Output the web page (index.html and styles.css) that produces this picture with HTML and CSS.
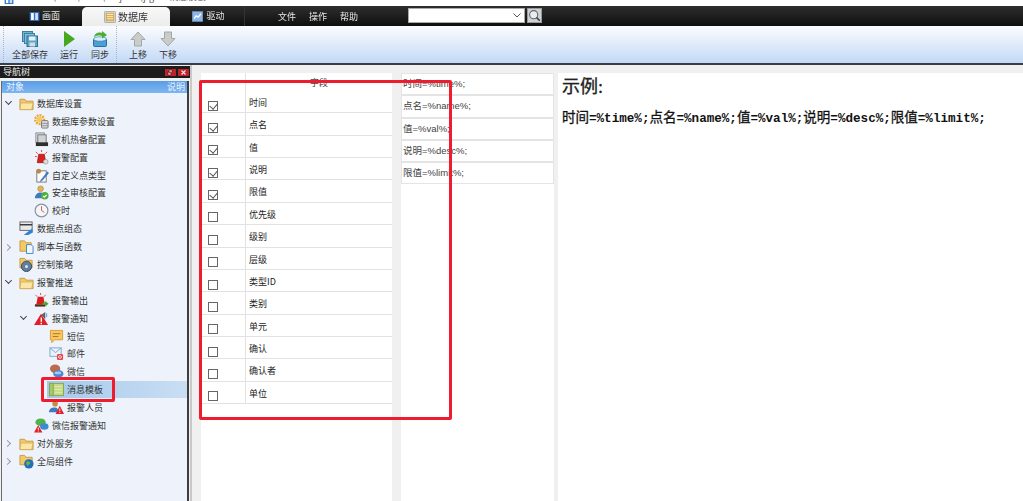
FILE: index.html
```html
<!DOCTYPE html>
<html lang="zh">
<head>
<meta charset="utf-8">
<title>消息模板</title>
<link rel="stylesheet" href="styles.css">
</head>
<body>
<svg class="defs" width="0" height="0" aria-hidden="true">
  <defs>
    <symbol id="folder" viewBox="0 0 16 16"><path d="M1 3.500h5l1.500 2H15v9H1z" fill="#f3c866" stroke="#c79a45"/><path d="M2 7.500h13l-1.500 7H1z" fill="#fbe6a6" stroke="#cfa550" stroke-width=".7"/></symbol>
    <symbol id="gear" viewBox="0 0 16 16"><circle cx="6" cy="6" r="4.600" fill="none" stroke="#eda52a" stroke-width="2.600" stroke-dasharray="2 1"/><circle cx="6" cy="6" r="3" fill="#f6c862"/><rect x="8" y="7" width="7" height="8" rx="1" fill="#d8dadf" stroke="#777"/><path d="M8 10h7M8 12.500h7" stroke="#777" stroke-width=".7"/></symbol>
    <symbol id="server" viewBox="0 0 16 16"><rect x="2" y="1" width="9" height="10" fill="#e8e8e8" stroke="#888"/><rect x="4" y="3" width="9" height="10" fill="#cfd2d6" stroke="#777"/><rect x="2" y="11" width="13" height="4" fill="#2e2e2e"/></symbol>
    <symbol id="alarm" viewBox="0 0 16 16"><path d="M5 4.500h6l1.500 9h-9z" fill="#d91f1f" stroke="#8e1010" stroke-width=".7"/><path d="M2 2l2 2M14 2l-2 2M1 7h2M8 0v2" stroke="#e94040"/><circle cx="12.500" cy="12.500" r="2.500" fill="#ddd" stroke="#888" stroke-width=".6"/></symbol>
    <symbol id="custom" viewBox="0 0 16 16"><rect x="3" y="3" width="10" height="12" fill="#fdfdfd" stroke="#777"/><circle cx="5" cy="3.500" r="2.600" fill="#b98b4a"/><path d="M14.500 4L8 12l-1.500 2.500L9 13l6.500-7.500z" fill="#3d7fd0" stroke="#2c5c9c" stroke-width=".5"/></symbol>
    <symbol id="user" viewBox="0 0 16 16"><circle cx="7" cy="4" r="3" fill="#e6b25a" stroke="#a97a2c" stroke-width=".6"/><path d="M1 14c0-4 3-6 6-6s5 2 5 6z" fill="#3f78c4"/><circle cx="11.500" cy="11.500" r="4" fill="#4fae3c"/><path d="M9.500 11.500l1.500 1.500 2.500-2.500" fill="none" stroke="#fff" stroke-width="1.200"/></symbol>
    <symbol id="clock" viewBox="0 0 16 16"><circle cx="8" cy="8" r="6.800" fill="#f4f5f8" stroke="#8b93a3" stroke-width="1.300"/><path d="M8 3.500V8l3 2" fill="none" stroke="#c35a50"/></symbol>
    <symbol id="dbcomp" viewBox="0 0 16 16"><rect x="1" y="1" width="13" height="9" fill="#e9e9e9" stroke="#666"/><path d="M1 4h13" stroke="#333" stroke-width="1.500"/><path d="M5 15l9-7 1 4-5 3z" fill="#2b84d8"/></symbol>
    <symbol id="folderdoc" viewBox="0 0 16 16"><path d="M1 2h5l1.500 2H13v9H1z" fill="#f3c866" stroke="#c79a45"/><path d="M8 6h5l2 2v7.500H8z" fill="#eef6fd" stroke="#3c87c8"/></symbol>
    <symbol id="foldercd" viewBox="0 0 16 16"><path d="M1 1.500h5l1.500 2H14v8H1z" fill="#f3c866" stroke="#c79a45"/><circle cx="8" cy="10" r="5.500" fill="#5f7f9c" stroke="#33495e"/><circle cx="8" cy="10" r="1.600" fill="#dce6ee"/></symbol>
    <symbol id="alarmout" viewBox="0 0 16 16"><path d="M4 4h6l1.500 8h-9z" fill="#d91f1f"/><path d="M1.500 2l2 2M12.500 2l-2 2M7 0v2" stroke="#e94040"/><rect x="1" y="12" width="11" height="2.500" fill="#5b2a18"/><path d="M9 10.500h3V8.500l3.500 3-3.500 3v-2H9z" fill="#46a52f"/></symbol>
    <symbol id="alarmnote" viewBox="0 0 16 16"><path d="M7.500 3L15 15H0z" fill="#e21f26"/><path d="M7 7h1.500v4.500H7zM7 12.500h1.500V14H7z" fill="#fff"/><path d="M8 4l4-3v8z" fill="#59616e"/><path d="M13.500 2.500v4" stroke="#5b9ade"/></symbol>
    <symbol id="sms" viewBox="0 0 16 16"><path d="M1.500 1.500h13v10H6l-3 3v-3H1.500z" fill="#f8c760" stroke="#d89c2c"/><path d="M4 5h8M4 8h6" stroke="#a97420"/></symbol>
    <symbol id="mail" viewBox="0 0 16 16"><rect x="1" y="2" width="12" height="9" fill="#eaf3fc" stroke="#7fa4cc"/><path d="M1 2l6 5 6-5" fill="none" stroke="#7fa4cc"/><rect x="8.500" y="8.500" width="6.500" height="6.500" rx="1.500" fill="#e8474b"/><circle cx="11.700" cy="11.700" r="1.500" fill="none" stroke="#fff" stroke-width=".8"/></symbol>
    <symbol id="wechat" viewBox="0 0 16 16"><ellipse cx="6.500" cy="5" rx="5.500" ry="4.500" fill="#bd6a4e"/><ellipse cx="10" cy="10.500" rx="5.500" ry="4" fill="#4d87d0"/><ellipse cx="9.500" cy="9.500" rx="3.500" ry="1.500" fill="#a6c9ee"/></symbol>
    <symbol id="template" viewBox="0 0 16 16"><rect x=".5" y="1.500" width="15" height="13" fill="#c5da84" stroke="#84a851"/><rect x=".5" y="1.500" width="4" height="13" fill="#a9c76c" stroke="#84a851"/><path d="M6 5h8M6 8h8M6 11h8" stroke="#e3eeb9"/></symbol>
    <symbol id="alarmuser" viewBox="0 0 16 16"><circle cx="6.500" cy="4" r="3" fill="#c98b3e"/><path d="M0 13c0-3.500 3-5 6-5s4 2 4 5z" fill="#3f78c4"/><path d="M11.500 6L16 15H7z" fill="#e21f26"/><path d="M11.100 9h.9v3h-.9zM11.100 12.800h.9v1h-.9z" fill="#fff"/></symbol>
    <symbol id="wxalarm" viewBox="0 0 16 16"><ellipse cx="7" cy="4.500" rx="5.500" ry="4" fill="#4fb24a"/><ellipse cx="11" cy="9" rx="4.500" ry="3.500" fill="#3d8ad6"/><path d="M4.500 7.500L9 15.500H0z" fill="#e21f26"/><path d="M4.100 10h.9v2.700h-.9zM4.100 13.300h.9v1h-.9z" fill="#fff"/></symbol>
    <symbol id="folderglobe" viewBox="0 0 16 16"><path d="M1 1.500h5l1.500 2H14v8H1z" fill="#f3c866" stroke="#c79a45"/><circle cx="10.500" cy="10.500" r="5" fill="#1f6fbe"/><path d="M7.500 9c2-2 3-1 4-.5s1 2-1 3-2 2-1.500 3" fill="#6fb04a"/></symbol>
    <symbol id="save" viewBox="0 0 16 16"><rect x=".5" y=".5" width="10" height="10" fill="#6fb4d6" stroke="#3d7f9f"/><rect x="2.500" y="2.500" width="10" height="10" fill="#7fc0de" stroke="#3d7f9f"/><rect x="5" y="5" width="10.500" height="10.500" fill="#5da7c9" stroke="#2f6f90"/><rect x="7" y="5.500" width="6.500" height="4" fill="#e6f2f8"/><rect x="7.500" y="11.500" width="5.500" height="4" fill="#d5dde2"/></symbol>
    <symbol id="sync" viewBox="0 0 16 16"><rect x="1.500" y="8" width="13" height="7.500" rx="1" fill="#4a9fd6" stroke="#2c6f9c"/><ellipse cx="8" cy="8" rx="6.500" ry="2.200" fill="#d9eefb" stroke="#2c6f9c" stroke-width=".6"/><path d="M2 6.500C2.500 2.500 6 .8 10 2V0l5 4-5 3.500V5C7 4 4 4.500 2 6.500z" fill="#4cae32"/></symbol>
    <symbol id="arrow" viewBox="0 0 16 16"><path d="M8 1l7 7.500h-3.500V15h-7V8.500H1z" fill="#c9cdc9" stroke="#a4a8a4"/></symbol>
    <symbol id="search" viewBox="0 0 16 16"><circle cx="7" cy="7" r="5" fill="#e9edf0" stroke="#5c6670" stroke-width="1.300"/><path d="M10.500 10.500l4 4" stroke="#3a3f44" stroke-width="2"/></symbol>
    <symbol id="tabscreen" viewBox="0 0 16 16"><rect x="1" y="1.500" width="14" height="13" fill="#2e6fc2"/><rect x="3" y="3" width="4" height="10" fill="#fff"/><rect x="9" y="3" width="4" height="10" fill="#cfe1f6"/></symbol>
    <symbol id="tabdb" viewBox="0 0 16 16"><rect x=".5" y=".5" width="15" height="15" rx="1.500" fill="#d9d9d9" stroke="#9a9a9a"/><rect x="3" y="3" width="10" height="10" fill="#fbe9b8" stroke="#c89a3c"/><path d="M3 6h10M3 8.500h10M3 11h10" stroke="#d19b2e"/></symbol>
    <symbol id="tabdrive" viewBox="0 0 16 16"><rect x=".5" y="1" width="15" height="14" fill="#8fb6e6" stroke="#6d9fd6"/><path d="M3 11l3-4 3 2 4-5" fill="none" stroke="#fff" stroke-width="2"/></symbol>
  </defs>
</svg>

<div class="app">
  <div class="titlebar">
    <svg class="title-icon"><use href="#tabscreen"/></svg>
    <span>ICS</span><span class="title-path">D:\kean\kiosk\Projects\jtgm - 消息模板</span>
  </div>

  <div class="menubar">
    <div class="tab tab-first"><svg class="tab-icon"><use href="#tabscreen"/></svg>画面</div>
    <div class="tab tab-active"><svg class="tab-icon"><use href="#tabdb"/></svg>数据库</div>
    <div class="tab tab-last"><svg class="tab-icon"><use href="#tabdrive"/></svg>驱动</div>
    <nav class="menu"><span>文件</span><span>操作</span><span>帮助</span></nav>
    <div class="combo"><svg class="chev" viewBox="0 0 8 5"><path d="M.5.500L4 4l3.500-3.500" fill="none" stroke="#555"/></svg></div>
    <div class="search-btn"><svg class="search-icon"><use href="#search"/></svg></div>
  </div>

  <div class="toolbar">
    <div class="tool-group">
      <div class="tool tool-save"><svg class="tool-icon"><use href="#save"/></svg>全部保存</div>
      <div class="tool tool-run"><svg class="tool-icon" viewBox="0 0 16 16"><path d="M3 0l11 8-11 8z" fill="#46a81e"/></svg>运行</div>
      <div class="tool"><svg class="tool-icon"><use href="#sync"/></svg>同步</div>
    </div>
    <div class="tool-group tool-group-2">
      <div class="tool"><svg class="tool-icon"><use href="#arrow"/></svg>上移</div>
      <div class="tool"><svg class="tool-icon flip"><use href="#arrow"/></svg>下移</div>
    </div>
  </div>

  <div class="main">
    <aside class="nav">
      <div class="nav-head"><span>导航树</span><div class="nav-btns"><i class="nav-btn"><svg class="nav-glyph" viewBox="0 0 7 7"><path d="M2 1h3v3H2zM1 3h3v3H1z" fill="#f5d5d5" stroke="#5a0c0c" stroke-width=".6"/></svg></i><i class="nav-btn"><svg class="nav-glyph" viewBox="0 0 7 7"><path d="M1.500 1.500l4 4M5.500 1.500l-4 4" stroke="#f7dede" stroke-width="1.200"/></svg></i></div></div>
      <div class="tree">
        <div class="tree-head"><span>对象</span><span>说明</span></div>
        <div class="row l1"><b class="tog open"></b><svg class="ico"><use href="#folder"/></svg>数据库设置</div>
        <div class="row l2"><b class="tog"></b><svg class="ico"><use href="#gear"/></svg>数据库参数设置</div>
        <div class="row l2"><b class="tog"></b><svg class="ico"><use href="#server"/></svg>双机热备配置</div>
        <div class="row l2"><b class="tog"></b><svg class="ico"><use href="#alarm"/></svg>报警配置</div>
        <div class="row l2"><b class="tog"></b><svg class="ico"><use href="#custom"/></svg>自定义点类型</div>
        <div class="row l2"><b class="tog"></b><svg class="ico"><use href="#user"/></svg>安全审核配置</div>
        <div class="row l2"><b class="tog"></b><svg class="ico"><use href="#clock"/></svg>校时</div>
        <div class="row l1"><b class="tog"></b><svg class="ico"><use href="#dbcomp"/></svg>数据点组态</div>
        <div class="row l1"><b class="tog shut"></b><svg class="ico"><use href="#folderdoc"/></svg>脚本与函数</div>
        <div class="row l1"><b class="tog"></b><svg class="ico"><use href="#foldercd"/></svg>控制策略</div>
        <div class="row l1"><b class="tog open"></b><svg class="ico"><use href="#folder"/></svg>报警推送</div>
        <div class="row l2"><b class="tog"></b><svg class="ico"><use href="#alarmout"/></svg>报警输出</div>
        <div class="row l2"><b class="tog open"></b><svg class="ico"><use href="#alarmnote"/></svg>报警通知</div>
        <div class="row l3"><b class="tog"></b><svg class="ico"><use href="#sms"/></svg>短信</div>
        <div class="row l3"><b class="tog"></b><svg class="ico"><use href="#mail"/></svg>邮件</div>
        <div class="row l3"><b class="tog"></b><svg class="ico"><use href="#wechat"/></svg>微信</div>
        <div class="row l3"><b class="tog"></b><span class="sel"><svg class="ico"><use href="#template"/></svg>消息模板</span></div>
        <div class="row l3"><b class="tog"></b><svg class="ico"><use href="#alarmuser"/></svg>报警人员</div>
        <div class="row l2"><b class="tog"></b><svg class="ico"><use href="#wxalarm"/></svg>微信报警通知</div>
        <div class="row l1"><b class="tog shut"></b><svg class="ico"><use href="#folder"/></svg>对外服务</div>
        <div class="row l1"><b class="tog shut"></b><svg class="ico"><use href="#folderglobe"/></svg>全局组件</div>
      </div>
    </aside>
    <div class="splitter"></div>

    <section class="grid">
      <div class="g-row g-head"><div class="g-check"></div><div class="g-name g-title">字段</div></div>
      <div class="g-row"><div class="g-check"><i class="cb on"></i></div><div class="g-name">时间</div></div>
      <div class="g-row"><div class="g-check"><i class="cb on"></i></div><div class="g-name">点名</div></div>
      <div class="g-row"><div class="g-check"><i class="cb on"></i></div><div class="g-name">值</div></div>
      <div class="g-row"><div class="g-check"><i class="cb on"></i></div><div class="g-name">说明</div></div>
      <div class="g-row"><div class="g-check"><i class="cb on"></i></div><div class="g-name">限值</div></div>
      <div class="g-row"><div class="g-check"><i class="cb"></i></div><div class="g-name">优先级</div></div>
      <div class="g-row"><div class="g-check"><i class="cb"></i></div><div class="g-name">级别</div></div>
      <div class="g-row"><div class="g-check"><i class="cb"></i></div><div class="g-name">层级</div></div>
      <div class="g-row"><div class="g-check"><i class="cb"></i></div><div class="g-name">类型ID</div></div>
      <div class="g-row"><div class="g-check"><i class="cb"></i></div><div class="g-name">类别</div></div>
      <div class="g-row"><div class="g-check"><i class="cb"></i></div><div class="g-name">单元</div></div>
      <div class="g-row"><div class="g-check"><i class="cb"></i></div><div class="g-name">确认</div></div>
      <div class="g-row"><div class="g-check"><i class="cb"></i></div><div class="g-name">确认者</div></div>
      <div class="g-row"><div class="g-check"><i class="cb"></i></div><div class="g-name">单位</div></div>
    </section>

    <section class="tpl">
      <div class="tpl-row">时间=%time%;</div>
      <div class="tpl-row">点名=%name%;</div>
      <div class="tpl-row">值=%val%;</div>
      <div class="tpl-row">说明=%desc%;</div>
      <div class="tpl-row">限值=%limit%;</div>
    </section>

    <section class="preview">
      <h1 class="pv-title">示例:</h1>
      <p class="pv-text"><span class="cj">时间</span>=%time%;<span class="cj">点名</span>=%name%;<span class="cj">值</span>=%val%;<span class="cj">说明</span>=%desc%;<span class="cj">限值</span>=%limit%;</p>
    </section>
  </div>

  <div class="mark mark-grid"></div>
  <div class="mark mark-item"></div>
</div>
</body>
</html>
```

FILE: styles.css
```css
* { box-sizing: border-box; }
html, body { margin: 0; padding: 0; height: 100%; overflow: hidden; }
body { font-family: "Noto Sans CJK SC", "Liberation Sans", sans-serif; font-size: 9px; color: #222; background: #f0f0f0; }
.defs { position: absolute; }
.app { position: relative; width: 1023px; height: 501px; display: flex; flex-direction: column; overflow: hidden; filter: blur(.4px); }

.titlebar { height: 6px; flex: none; background: #fff; display: flex; align-items: flex-end; gap: 12px; padding: 0 0 3px 4px; font-size: 9px; line-height: 12px; color: #555; overflow: hidden; }
.title-icon { width: 10px; height: 10px; flex: none; margin-bottom: -2px; margin-right: -8px; }

.menubar { height: 20px; flex: none; display: flex; align-items: stretch; background: linear-gradient(#2e2e2e, #0f0f0f); color: #e6e6e6; font-size: 9px; }
.tab { display: flex; align-items: center; justify-content: center; gap: 2px; line-height: 20px; }
.tab-first { width: 82px; padding-left: 7px; }
.tab-active { width: 88px; margin-top: 1px; background: linear-gradient(#f8f8f8, #ececec); border-radius: 5px 5px 0 0; color: #333; font-size: 10px; }
.tab-last { width: 75px; padding-left: 3px; gap: 3px; border-right: 1px solid #333; }
.tab-icon { width: 11px; height: 11px; }
.tab-active .tab-icon { width: 12px; height: 12px; }
.menu { display: flex; gap: 13px; margin-left: 33px; align-items: center; }
.combo { width: 117px; height: 15px; margin: 2px 0 0 50px; background: #fff; border: 1px solid #aaa; display: flex; align-items: center; justify-content: flex-end; padding-right: 3px; }
.chev { width: 8px; height: 5px; }
.search-btn { width: 15px; height: 15px; margin: 2px 0 0 2px; background: #cfd2d4; border: 1px solid #9a9a9a; display: flex; align-items: center; justify-content: center; }
.search-icon { width: 13px; height: 13px; }

.toolbar { height: 39px; flex: none; display: flex; background: linear-gradient(#fbfcfe, #c3d9f6); border-bottom: 2px solid #3b3f45; padding-left: 3px; }
.tool-group { display: flex; width: 113px; padding-left: 5px; border-left: 1px dotted #aab4c2; }
.tool-group-2 { width: auto; padding-left: 6px; }
.tool { display: flex; flex-direction: column; align-items: center; width: 30px; padding-top: 5px; line-height: 13px; color: #333; gap: 1px; white-space: nowrap; }
.tool-save { width: 42px; }
.tool-run { width: 32px; margin-left: 2px; }
.tool-icon { width: 16px; height: 16px; flex: none; }
.flip { transform: scaleY(-1); }

.main { flex: 1; min-height: 0; display: flex; background: #f0f0f0; }
.nav { width: 190px; flex: none; padding-top: 1px; }
.nav-head { height: 12px; background: #1c1c1c; color: #eee; display: flex; justify-content: space-between; align-items: center; padding: 0 1px 0 3px; font-size: 9px; line-height: 12px; }
.nav-btns { display: flex; gap: 2px; }
.nav-btn { width: 11px; height: 7px; background: #c2202a; display: flex; justify-content: center; }
.nav-glyph { width: 7px; height: 7px; }
.tree { margin: 3px 1px 0; height: 420px; background: #eef3fb; border-left: 1px solid #6b6b6b; border-right: 2px solid #3e3e3e; }
.tree-head { height: 12px; background: linear-gradient(#5a9de6, #7eb6ef); color: #eaf3ff; display: flex; justify-content: space-between; padding: 0 2px 0 4px; line-height: 12px; margin-bottom: 1.500px; }
.row { height: 17.9px; display: flex; align-items: center; white-space: nowrap; color: #333; gap: 3px; }
.l1 { padding-left: 3px; }
.l2 { padding-left: 18px; }
.l3 { padding-left: 33px; }
.tog { width: 11px; height: 8px; flex: none; }
.tog.open::after { content: ""; display: block; width: 4px; height: 4px; margin: 0 0 0 1px; border-right: 1.300px solid #444; border-bottom: 1.300px solid #444; transform: rotate(45deg); }
.tog.shut::after { content: ""; display: block; width: 4px; height: 4px; margin: 2px 0 0 0; border-right: 1.300px solid #999; border-top: 1.300px solid #999; transform: rotate(45deg); }
.ico { width: 15px; height: 15px; flex: none; }
.sel { flex: 1; height: 17px; margin-left: -2px; padding-left: 2px; display: flex; align-items: center; gap: 3px; background: linear-gradient(90deg, #a5c9ea, #c9def3); }

.splitter { width: 11px; flex: none; background: linear-gradient(90deg, #c9c9c9 0, #c9c9c9 2px, #f0f0f0 2px); }
.grid { width: 191px; flex: none; margin-top: 8px; background: #fff; }
.g-row { height: 22.36px; display: flex; border-bottom: 1px solid #e2e2e2; }
.g-head { height: 18px; border-bottom: 0; }
.g-check { width: 45px; flex: none; border-right: 1px solid #e2e2e2; display: flex; align-items: center; padding: 8px 0 0 7px; }
.g-name { flex: 1; padding-left: 3px; line-height: 23px; color: #222; }
.g-title { text-align: center; line-height: 20px; padding: 0; color: #444; }
.cb { width: 10px; height: 10px; border: 1px solid #666; background: #fff; display: block; position: relative; }
.cb.on::after { content: ""; position: absolute; left: 2px; top: 0; width: 4px; height: 6px; border-right: 1px solid #555; border-bottom: 1px solid #555; transform: rotate(40deg); }

.tpl { width: 153px; flex: none; margin: 8px 4px 0 9px; background: #fff; }
.tpl-row { height: 22.25px; border: 1px solid #e4e4e4; border-bottom-width: 1.500px; padding-left: 1px; line-height: 20px; color: #444; font-family: "Liberation Sans", "Noto Sans CJK SC", sans-serif; font-size: 9.500px; white-space: nowrap; }

.preview { flex: 1; margin-top: 8px; background: #fff; padding: 0 0 0 4px; min-width: 0; }
.pv-title { margin: 2px 0 0; font-family: "Liberation Serif", "Noto Sans CJK SC", serif; font-weight: 400; -webkit-text-stroke: .35px #222; font-size: 18px; line-height: 24px; color: #222; }
.pv-text { margin: 9px 0 0; font-family: "Liberation Mono", monospace; font-weight: 700; font-size: 12.600px; line-height: 16px; white-space: nowrap; color: #111; }
.cj { font-family: "Noto Sans CJK SC", sans-serif; font-size: 13.500px; font-weight: 400; -webkit-text-stroke: .3px #111; }

.mark { position: absolute; border: 3px solid #ee1c2e; border-radius: 2px; pointer-events: none; }
.mark-grid { left: 199px; top: 80px; width: 253px; height: 340px; }
.mark-item { left: 41px; top: 377px; width: 74px; height: 25px; }
```
